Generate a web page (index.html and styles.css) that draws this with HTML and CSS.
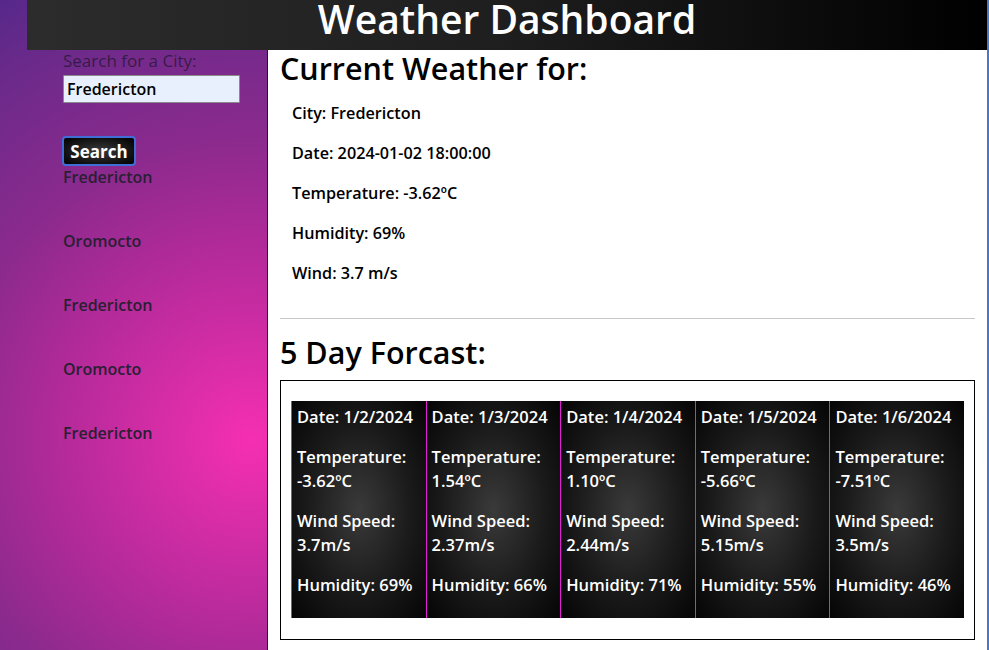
FILE: index.html
```html
<!DOCTYPE html>
<html lang="en">
<head>
<meta charset="utf-8">
<title>Weather Dashboard</title>
<link rel="stylesheet" href="styles.css">
</head>
<body>
<div class="page">
  <header class="topbar">
    <h1 class="title">Weather Dashboard</h1>
  </header>
  <div class="layout">
    <aside class="sidebar">
      <label class="search-label" for="city">Search for a City:</label>
      <input class="search-input" id="city" type="text" value="Fredericton">
      <button class="search-btn" type="button">Search</button>
      <ul class="history">
        <li>Fredericton</li>
        <li>Oromocto</li>
        <li>Fredericton</li>
        <li>Oromocto</li>
        <li>Fredericton</li>
      </ul>
    </aside>
    <main class="main">
      <h2 class="section-title">Current Weather for:</h2>
      <div class="current">
        <p>City: Fredericton</p>
        <p>Date: 2024-01-02 18:00:00</p>
        <p>Temperature: -3.62ºC</p>
        <p>Humidity: 69%</p>
        <p>Wind: 3.7 m/s</p>
      </div>
      <hr class="divider">
      <h2 class="section-title">5 Day Forcast:</h2>
      <div class="forecast">
        <div class="cards">
          <div class="card">
            <p>Date: 1/2/2024</p>
            <p>Temperature:<br>-3.62ºC</p>
            <p>Wind Speed:<br>3.7m/s</p>
            <p>Humidity: 69%</p>
          </div>
          <div class="card">
            <p>Date: 1/3/2024</p>
            <p>Temperature:<br>1.54ºC</p>
            <p>Wind Speed:<br>2.37m/s</p>
            <p>Humidity: 66%</p>
          </div>
          <div class="card">
            <p>Date: 1/4/2024</p>
            <p>Temperature:<br>1.10ºC</p>
            <p>Wind Speed:<br>2.44m/s</p>
            <p>Humidity: 71%</p>
          </div>
          <div class="card">
            <p>Date: 1/5/2024</p>
            <p>Temperature:<br>-5.66ºC</p>
            <p>Wind Speed:<br>5.15m/s</p>
            <p>Humidity: 55%</p>
          </div>
          <div class="card">
            <p>Date: 1/6/2024</p>
            <p>Temperature:<br>-7.51ºC</p>
            <p>Wind Speed:<br>3.5m/s</p>
            <p>Humidity: 46%</p>
          </div>
        </div>
      </div>
    </main>
  </div>
</div>
</body>
</html>
```

FILE: styles.css
```css
* { box-sizing: border-box; }

html, body { height: 100%; }

body {
  margin: 0;
  overflow: hidden;
  font-family: "Open Sans", "DejaVu Sans", sans-serif;
  background: radial-gradient(circle at 250px 440px,
    #f52fb2 0px,
    #b02a98 200px,
    #8c2a8e 300px,
    #6a2a8a 440px,
    #55288a 510px,
    #4a3c9e 620px,
    #4a78c8 740px,
    #4a7ac8 1200px);
}

.page {
  width: 960px;
  margin-left: 27px;
}

.topbar {
  height: 50px;
  background: linear-gradient(90deg, #2c2c2c 0%, #1e1e1e 50%, #000 100%);
  display: flex;
  align-items: flex-start;
  justify-content: center;
}

.title {
  margin: 0;
  color: #fff;
  font-size: 39px;
  font-weight: 600;
  line-height: 37px;
}

.layout {
  display: flex;
  min-height: 600px;
}

.sidebar {
  width: 241px;
  flex: none;
  border-right: 1px solid #1a1a1a;
  padding: 0 0 0 36px;
}

.search-label {
  display: block;
  font-size: 17px;
  line-height: 22px;
  font-weight: 500;
  color: rgba(25, 20, 40, 0.7);
}

.search-input {
  display: block;
  margin-top: 3px;
  width: 177px;
  height: 28px;
  padding: 0 3px;
  font-family: inherit;
  font-size: 16px;
  font-weight: 600;
  color: #000;
  background: #e8f0fe;
  border: 1px solid #8a8a8a;
  border-radius: 1px;
  outline: none;
}

.search-btn {
  display: block;
  margin: 33px 0 0 -1px;
  width: 74px;
  height: 30px;
  padding: 0;
  font-family: inherit;
  font-size: 17px;
  font-weight: 700;
  color: #fff;
  background: radial-gradient(ellipse at center, #3a3a3a 0%, #111 70%, #000 100%);
  border: 2px solid #3f6fd6;
  border-radius: 4px;
}

.history {
  list-style: none;
  margin: 0;
  padding: 0;
}

.history li {
  font-size: 16px;
  font-weight: 600;
  line-height: 22px;
  margin-bottom: 42px;
  color: #2a1f33;
}

.main {
  flex: 1;
  background: #fff;
  padding: 0 12px;
  color: #000;
}

.section-title {
  margin: 0;
  font-size: 30.5px;
  font-weight: 600;
  line-height: 36px;
}

.current {
  padding: 15px 0 0 12px;
}

.current p {
  margin: 0 0 16px;
  font-size: 16.2px;
  font-weight: 600;
  line-height: 24px;
}

.divider {
  margin: 33px 0 15px;
  border: 0;
  border-top: 1px solid #c8c8c8;
}

.forecast {
  margin-top: 10px;
  border: 1px solid #000;
  padding: 20px 10px 21px;
}

.cards {
  display: flex;
}

.card {
  flex: 1 1 auto;
  padding: 4px 5px 5px;
  color: #fff;
  border-left: 1px solid #e41ed6;
  background: radial-gradient(ellipse at center, #3a3a3a 0%, #1a1a1a 55%, #050505 100%);
}

.card p {
  margin: 0 0 16px;
  font-size: 16.5px;
  font-weight: 600;
  line-height: 24px;
  white-space: nowrap;
}
```
